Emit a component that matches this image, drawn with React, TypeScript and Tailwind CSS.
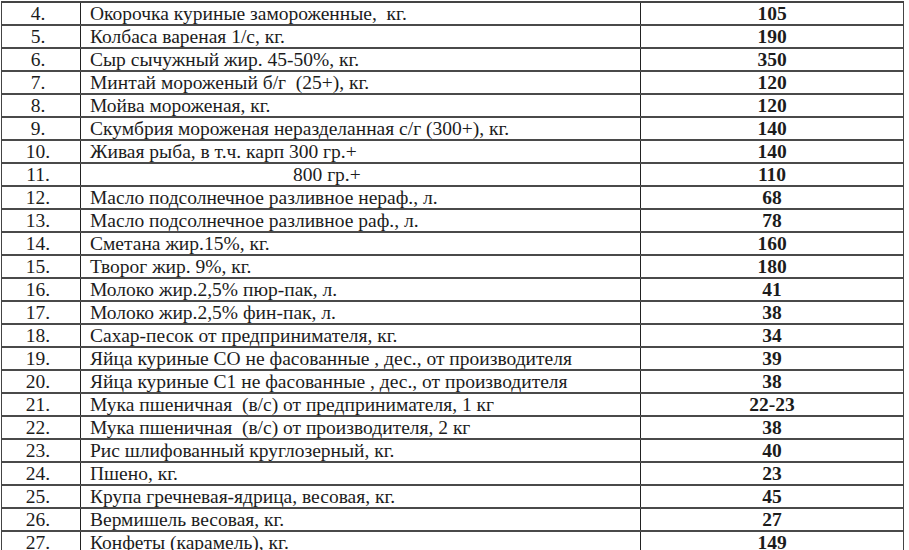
import React from "react";

const rows: [string, string, string, boolean?][] = [
  ["4.", "Окорочка куриные замороженные,  кг.", "105"],
  ["5.", "Колбаса вареная 1/с, кг.", "190"],
  ["6.", "Сыр сычужный жир. 45-50%, кг.", "350"],
  ["7.", "Минтай мороженый б/г  (25+), кг.", "120"],
  ["8.", "Мойва мороженая, кг.", "120"],
  ["9.", "Скумбрия мороженая неразделанная с/г (300+), кг.", "140"],
  ["10.", "Живая рыба, в т.ч. карп 300 гр.+", "140"],
  ["11.", "800 гр.+", "110", true],
  ["12.", "Масло подсолнечное разливное нераф., л.", "68"],
  ["13.", "Масло подсолнечное разливное раф., л.", "78"],
  ["14.", "Сметана жир.15%, кг.", "160"],
  ["15.", "Творог жир. 9%, кг.", "180"],
  ["16.", "Молоко жир.2,5% пюр-пак, л.", "41"],
  ["17.", "Молоко жир.2,5% фин-пак, л.", "38"],
  ["18.", "Сахар-песок от предпринимателя, кг.", "34"],
  ["19.", "Яйца куриные СО не фасованные , дес., от производителя", "39"],
  ["20.", "Яйца куриные С1 не фасованные , дес., от производителя", "38"],
  ["21.", "Мука пшеничная  (в/с) от предпринимателя, 1 кг", "22-23"],
  ["22.", "Мука пшеничная  (в/с) от производителя, 2 кг", "38"],
  ["23.", "Рис шлифованный круглозерный, кг.", "40"],
  ["24.", "Пшено, кг.", "23"],
  ["25.", "Крупа гречневая-ядрица, весовая, кг.", "45"],
  ["26.", "Вермишель весовая, кг.", "27"],
  ["27.", "Конфеты (карамель), кг.", "149"],
];

export default function App() {
  return (
    <div className="w-[909px] h-[550px] overflow-hidden bg-white text-[#1c1c1c] font-['Liberation_Serif','Times_New_Roman',serif]">
      <div className="ml-[1px] mt-[1px] w-[903px] border-t-2 border-[#444] border-x-[1.5px]">
        {rows.map(([n, name, v, indent]) => (
          <div key={n} className="flex h-[23px] border-b-2 border-[#4a4a4a] text-[19.5px] leading-[22px]">
            <div className="w-[79px] shrink-0 border-r-[1.5px] border-[#222] pr-[6px] text-center whitespace-pre">
              {n}
            </div>
            <div
              className={
                "w-[560px] shrink-0 border-r-[1.5px] border-[#222] whitespace-pre " +
                (indent ? "pl-[212px]" : "pl-[9px]")
              }
            >
              {name}
            </div>
            <div className="flex-1 text-center font-bold">{v}</div>
          </div>
        ))}
      </div>
    </div>
  );
}
